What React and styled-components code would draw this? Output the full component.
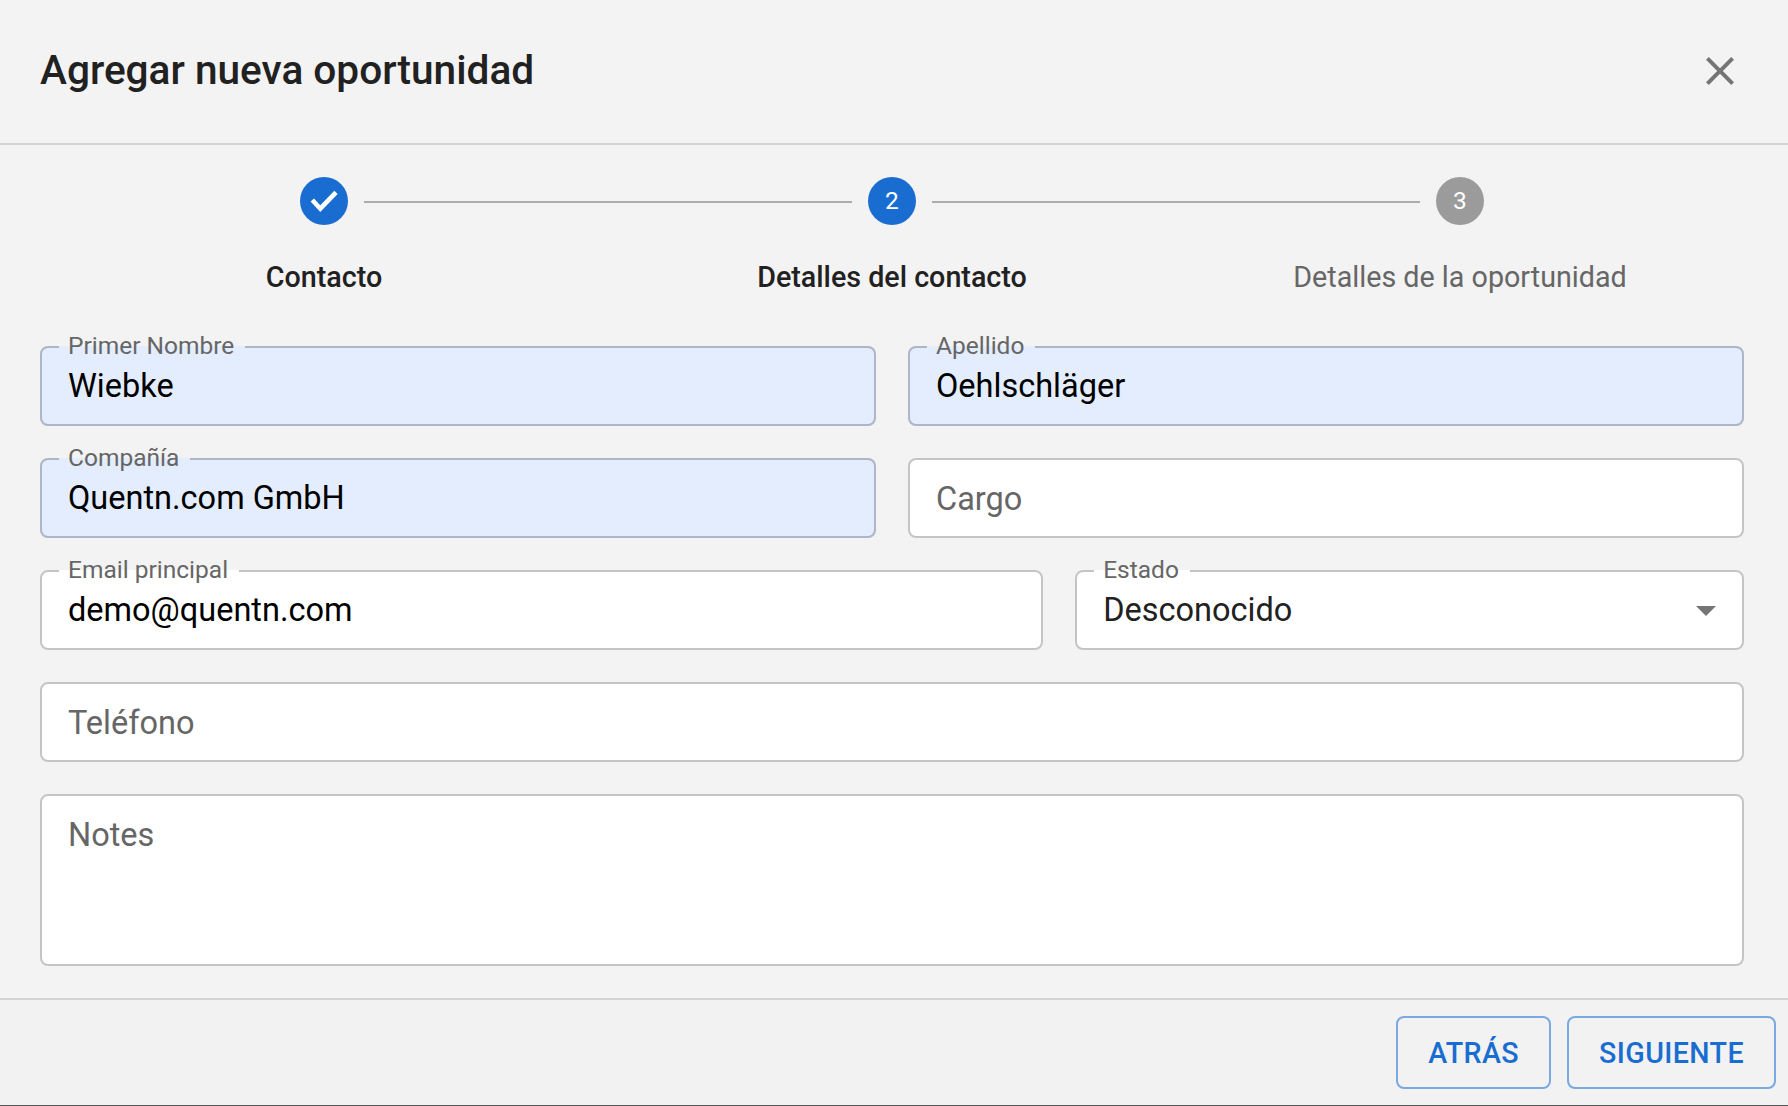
import React from 'react';
import styled, { createGlobalStyle } from 'styled-components';

const GlobalStyle = createGlobalStyle`
  html, body { margin: 0; padding: 0; }
  body {
    background: #f3f3f3;
    font-family: Roboto, "Liberation Sans", sans-serif;
    color: #212121;
  }
`;

const Dialog = styled.div`
  width: 1788px;
  height: 1106px;
  box-sizing: border-box;
  display: flex;
  flex-direction: column;
  border-bottom: 1px solid #555;
`;

const Header = styled.header`
  height: 145px;
  box-sizing: border-box;
  padding: 0 44px 4px 40px;
  display: flex;
  align-items: center;
  justify-content: space-between;
  border-bottom: 2px solid #d4d4d4;
  flex: none;
`;

const Title = styled.h2`
  margin: 0;
  font-size: 40.6px;
  font-weight: 500;
  color: #212121;
`;

const CloseButton = styled.button`
  width: 48px;
  height: 48px;
  margin-top: 3px;
  padding: 0;
  border: 0;
  background: none;
  color: #757575;
`;

const Stepper = styled.div`
  display: grid;
  grid-template-columns: repeat(3, 1fr);
  padding: 32px 44px 0 40px;
`;

const Step = styled.div`
  display: flex;
  flex-direction: column;
  align-items: center;
`;

const StepTrack = styled.div`
  width: 100%;
  display: flex;
  align-items: center;
  gap: 16px;
`;

const Connector = styled.span`
  flex: 1;
  height: 2px;
  margin-top: 2px;
  background: ${p => (p.$hidden ? 'transparent' : '#adadad')};
`;

const StepCircle = styled.div`
  width: 48px;
  height: 48px;
  border-radius: 50%;
  flex: none;
  display: flex;
  align-items: center;
  justify-content: center;
  background: ${p => (p.$active ? '#1a6dd0' : '#9b9b9b')};
  color: #fff;
  font-size: 24.5px;
`;

const StepNumber = styled.span`
  margin-top: -2px;
`;

const StepLabel = styled.div`
  margin-top: 33px;
  font-size: 28.7px;
  line-height: 38px;
  font-weight: ${p => (p.$active ? 500 : 400)};
  color: ${p => (p.$active ? '#212121' : '#666')};
`;

const Form = styled.form`
  flex: 1;
  display: flex;
  flex-direction: column;
  gap: 32px;
  padding: 50px 44px 0 40px;
`;

const Row = styled.div`
  display: grid;
  grid-template-columns: ${p => p.$columns || '1fr'};
  gap: 32px;
`;

const Field = styled.fieldset`
  margin: 0;
  min-width: 0;
  height: ${p => p.$height || 80}px;
  box-sizing: border-box;
  padding: 0 28px 0 26px;
  display: flex;
  align-items: ${p => (p.$multiline ? 'flex-start' : 'center')};
  border: 2px solid ${p => (p.$filled ? '#adb5c6' : '#c4c4c4')};
  border-radius: 8px;
  background: ${p => (p.$filled ? '#e3edfd' : '#fff')};
`;

const Legend = styled.legend`
  height: 2px;
  line-height: 0;
  margin-left: -9px;
  padding: 0 11px 0 9px;
  font-size: 24.5px;
  color: #666;
  white-space: nowrap;
`;

const Input = styled.input`
  width: 100%;
  padding: ${p => (p.placeholder ? 2 : 0)}px 0 0;
  border: 0;
  outline: 0;
  background: transparent;
  font: 400 32.5px/40px Roboto, sans-serif;
  color: #000;

  &::placeholder {
    color: #666;
    opacity: 1;
  }
`;

const Notes = styled.textarea`
  width: 100%;
  height: 100%;
  padding: 19px 0 0;
  border: 0;
  outline: 0;
  resize: none;
  background: transparent;
  font: 400 32.5px/40px Roboto, sans-serif;

  &::placeholder {
    color: #666;
    opacity: 1;
  }
`;

const SelectValue = styled.div`
  flex: 1;
  font-size: 32.5px;
  line-height: 40px;
  color: #212121;
`;

const Caret = styled.svg`
  width: 48px;
  height: 48px;
  margin-right: -16px;
  fill: #757575;
  flex: none;
`;

const Footer = styled.footer`
  flex: none;
  height: 107px;
  box-sizing: border-box;
  padding: 16px 12px 0 0;
  display: flex;
  justify-content: flex-end;
  gap: 16px;
  border-top: 2px solid #d4d4d4;
  background: #f2f2f2;
`;

const ActionButton = styled.button`
  height: 73px;
  box-sizing: border-box;
  padding: 0 30px;
  border: 2px solid #7aa9e2;
  border-radius: 8px;
  background: transparent;
  font: 500 28.6px Roboto, sans-serif;
  letter-spacing: 0.4px;
  color: #1a6dd0;
`;

const steps = [
  { label: 'Contacto', active: true, done: true },
  { label: 'Detalles del contacto', active: true, number: 2 },
  { label: 'Detalles de la oportunidad', active: false, number: 3 },
];

function TextField({ label, value, placeholder, filled }) {
  return (
    <Field $filled={filled}>
      {label && <Legend>{label}</Legend>}
      <Input readOnly value={value} placeholder={placeholder} />
    </Field>
  );
}

export default function App() {
  return (
    <Dialog>
      <GlobalStyle />
      <Header>
        <Title>Agregar nueva oportunidad</Title>
        <CloseButton type="button" aria-label="Cerrar">
          <svg viewBox="0 0 24 24" width="48" height="48" fill="currentColor">
            <path d="M19 6.41L17.59 5 12 10.59 6.41 5 5 6.41 10.59 12 5 17.59 6.41 19 12 13.41 17.59 19 19 17.59 13.41 12z" />
          </svg>
        </CloseButton>
      </Header>

      <Stepper>
        {steps.map((step, i) => (
          <Step key={step.label}>
            <StepTrack>
              <Connector $hidden={i === 0} />
              <StepCircle $active={step.active}>
                {step.done ? (
                  <svg viewBox="0 0 48 48" width="48" height="48" fill="none" stroke="currentColor" strokeWidth="4.6">
                    <path d="M12.3 23l8 8.7L36 15.3" />
                  </svg>
                ) : (
                  <StepNumber>{step.number}</StepNumber>
                )}
              </StepCircle>
              <Connector $hidden={i === steps.length - 1} />
            </StepTrack>
            <StepLabel $active={step.active}>{step.label}</StepLabel>
          </Step>
        ))}
      </Stepper>

      <Form>
        <Row $columns="1fr 1fr">
          <TextField label="Primer Nombre" value="Wiebke" filled />
          <TextField label="Apellido" value="Oehlschläger" filled />
        </Row>
        <Row $columns="1fr 1fr">
          <TextField label="Compañía" value="Quentn.com GmbH" filled />
          <TextField placeholder="Cargo" value="" />
        </Row>
        <Row $columns="3fr 2fr">
          <TextField label="Email principal" value="demo@quentn.com" />
          <Field>
            <Legend>Estado</Legend>
            <SelectValue>Desconocido</SelectValue>
            <Caret viewBox="0 0 24 24">
              <path d="M7 10l5 5 5-5z" />
            </Caret>
          </Field>
        </Row>
        <Row>
          <TextField placeholder="Teléfono" value="" />
        </Row>
        <Row>
          <Field $height={172} $multiline>
            <Notes readOnly placeholder="Notes" />
          </Field>
        </Row>
      </Form>

      <Footer>
        <ActionButton type="button">ATRÁS</ActionButton>
        <ActionButton type="button">SIGUIENTE</ActionButton>
      </Footer>
    </Dialog>
  );
}
